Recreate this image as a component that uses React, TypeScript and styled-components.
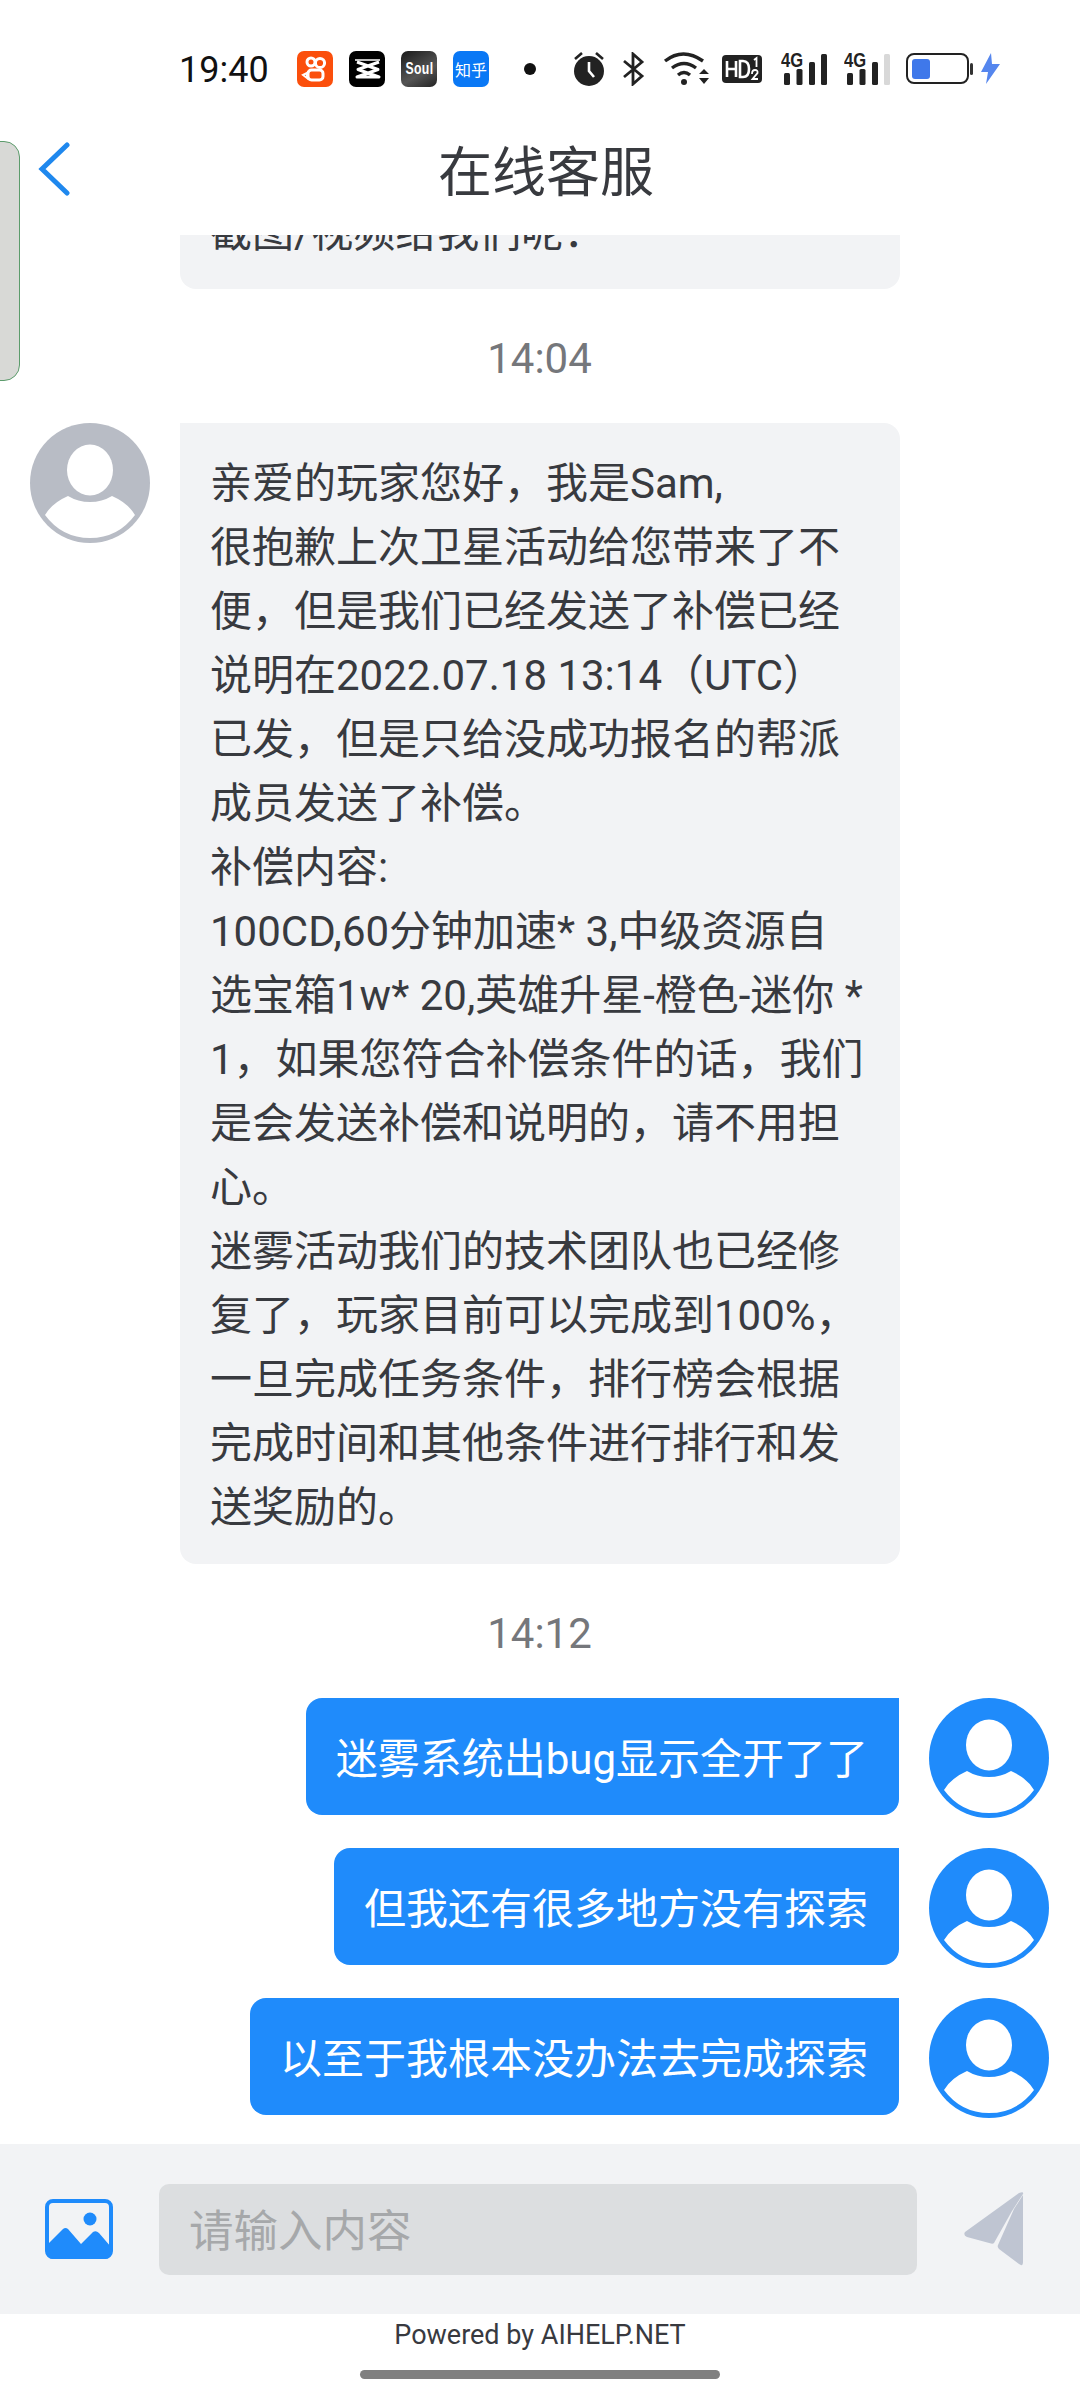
import React from "react";
import styled, { createGlobalStyle } from "styled-components";

const Global = createGlobalStyle`
  html, body { margin: 0; padding: 0; background: #fff; }
  body { font-family: Roboto, "Noto Sans CJK SC", sans-serif; }
  * { box-sizing: border-box; }
`;

const Page = styled.div`
  position: relative;
  width: 1080px;
  height: 2400px;
  display: flex;
  flex-direction: column;
  overflow: hidden;
  background: #fff;
  color: #383a3f;
`;

const StatusBar = styled.div`
  height: 130px;
  flex: none;
  display: flex;
  align-items: center;
  padding: 8px 0 0 179px;
`;
const Clock = styled.div`
  width: 118px;
  padding-top: 2px;
  font-size: 36px;
  line-height: 40px;
  color: #111;
`;
const AppIcons = styled.div`
  display: flex;
  gap: 16px;
`;
const AppIcon = styled.div<{ $bg: string }>`
  width: 36px;
  height: 36px;
  border-radius: 7px;
  background: ${(p) => p.$bg};
  color: #fff;
  display: flex;
  align-items: center;
  justify-content: center;
  overflow: hidden;
`;
const SoulText = styled.span`
  font-family: "Liberation Sans", sans-serif;
  font-size: 17px;
  font-weight: 700;
  transform: scaleX(0.72);
  letter-spacing: 0.5px;
`;
const ZhihuText = styled.span`
  font-family: "Noto Sans CJK SC", sans-serif;
  font-size: 16px;
  white-space: nowrap;
`;
const Dot = styled.div`
  width: 12px;
  height: 12px;
  border-radius: 50%;
  background: #111;
  margin: 0 37px 0 35px;
`;
const StatusIcons = styled.div`
  display: flex;
  align-items: center;
`;
const Glyph = styled.svg<{ $after: number }>`
  flex: none;
  margin-right: ${(p) => p.$after}px;
`;
const FourG = styled.div<{ $after: number }>`
  position: relative;
  flex: none;
  width: 46px;
  height: 32px;
  margin-right: ${(p) => p.$after}px;
  font-family: "Liberation Sans", sans-serif;
`;
const FourGLabel = styled.span`
  position: absolute;
  left: 0;
  top: -3px;
  font-size: 19.5px;
  line-height: 20px;
  font-weight: 700;
  color: #222;
  transform-origin: left top;
  transform: scaleX(0.85);
`;
const Bars = styled.svg`
  position: absolute;
  left: 0;
  top: 0;
`;

const Header = styled.header`
  position: relative;
  flex: none;
  height: 105px;
  display: flex;
  align-items: center;
  justify-content: center;
  padding: 0 0 18px 12px;
`;
const Title = styled.h1`
  margin: 0;
  font-size: 54px;
  line-height: 84px;
  font-weight: 400;
  color: #383a3f;
`;
const Back = styled.svg`
  position: absolute;
  left: 38px;
  top: 12px;
`;
const SidePill = styled.div`
  position: absolute;
  left: -20px;
  top: 141px;
  width: 40px;
  height: 240px;
  border-radius: 16px;
  background: #d8d9d6;
  border: 1px solid #5c9c6c;
`;

const Messages = styled.main`
  flex: 1;
  min-height: 0;
  overflow: hidden;
  display: flex;
  flex-direction: column;
  justify-content: flex-end;
  padding: 0 31px 26px 30px;
`;
const Stamp = styled.div`
  flex: none;
  text-align: center;
  font-size: 42px;
  padding-top: 5px;
  line-height: 129px;
  height: 134px;
  color: #75777b;
`;
const Row = styled.div<{ $mine?: boolean }>`
  flex: none;
  display: flex;
  gap: 30px;
  align-items: flex-start;
  justify-content: ${(p) => (p.$mine ? "flex-end" : "flex-start")};
  & + & {
    margin-top: 30px;
  }
`;
const Spacer = styled.div`
  flex: none;
  width: 120px;
`;
const Bubble = styled.div<{ $mine?: boolean }>`
  width: ${(p) => (p.$mine ? "auto" : "720px")};
  padding: ${(p) => (p.$mine ? "30px 31px 23px 30px" : "29px 31px 24px 30px")};
  border-radius: ${(p) => (p.$mine ? "16px 0 16px 16px" : "0 16px 16px 16px")};
  background: ${(p) => (p.$mine ? "#1f8bfb" : "#f2f3f5")};
  color: ${(p) => (p.$mine ? "#fff" : "#383a3f")};
  font-size: 42px;
  line-height: 64px;
`;
const Line = styled.div`
  white-space: nowrap;
`;
const AvatarIcon = styled.svg`
  flex: none;
`;

const InputBar = styled.div`
  flex: none;
  height: 170px;
  background: #f2f3f5;
  display: flex;
  align-items: center;
  padding: 0 57px 0 45px;
`;
const Field = styled.div`
  flex: none;
  width: 758px;
  height: 91px;
  margin: 0 47px 0 46px;
  border-radius: 10px;
  background: #dcdee0;
  color: #a6a8aa;
  font-size: 44.5px;
  line-height: 85px;
  padding: 6px 0 0 30px;
`;
const Powered = styled.footer`
  flex: none;
  height: 86px;
  display: flex;
  flex-direction: column;
  align-items: center;
`;
const PoweredText = styled.div`
  margin-top: 3px;
  font-size: 27px;
  line-height: 36px;
  color: #383a3f;
`;
const HomeBar = styled.div`
  width: 360px;
  height: 9px;
  margin-top: 17px;
  border-radius: 5px;
  background: #808080;
`;

const Avatar = ({ mine }: { mine?: boolean }) => (
  <AvatarIcon width="120" height="120" viewBox="0 0 120 120">
    <circle cx="60" cy="60" r="60" fill={mine ? "#1f8bfb" : "#b8bcc5"} />
    <ellipse cx="60" cy="47" rx="23" ry="25.5" fill="#fff" />
    <path d="M15 92Q22 80 38 73Q48 79 60 79Q72 79 82 73Q98 80 105 92Q88 115 60 115Q32 115 15 92Z" fill="#fff" />
  </AvatarIcon>
);

const Signal = ({ last, after }: { last: string; after: number }) => (
  <FourG $after={after}>
    <FourGLabel>4G</FourGLabel>
    <Bars width="46" height="32" viewBox="0 0 46 32">
      <rect x="3" y="20" width="6" height="12" rx="1.5" fill="#222" />
      <rect x="15.500" y="16" width="6" height="16" rx="1.5" fill="#222" />
      <rect x="28" y="9" width="6" height="23" rx="1.5" fill="#222" />
      <rect x="40" y="1" width="6" height="31" rx="1.5" fill={last} />
    </Bars>
  </FourG>
);

const firstLines = ["截图/视频给我们呢："];
const longLines = [
  "亲爱的玩家您好，我是Sam,",
  "很抱歉上次卫星活动给您带来了不",
  "便，但是我们已经发送了补偿已经",
  "说明在2022.07.18 13:14（UTC）",
  "已发，但是只给没成功报名的帮派",
  "成员发送了补偿。",
  "补偿内容:",
  "100CD,60分钟加速* 3,中级资源自",
  "选宝箱1w* 20,英雄升星-橙色-迷你 *",
  "1，如果您符合补偿条件的话，我们",
  "是会发送补偿和说明的，请不用担",
  "心。",
  "迷雾活动我们的技术团队也已经修",
  "复了，玩家目前可以完成到100%，",
  "一旦完成任务条件，排行榜会根据",
  "完成时间和其他条件进行排行和发",
  "送奖励的。",
];
const mine = ["迷雾系统出bug显示全开了了", "但我还有很多地方没有探索", "以至于我根本没办法去完成探索"];

export default function App() {
  return (
    <Page>
      <Global />
      <StatusBar>
        <Clock>19:40</Clock>
        <AppIcons>
          <AppIcon $bg="#fb4f0c">
            <svg width="30" height="30" viewBox="0 0 30 30" fill="none" stroke="#fff" strokeWidth="3">
              <circle cx="11" cy="8" r="4" />
              <circle cx="20" cy="9" r="4.6" />
              <rect x="8" y="16" width="15" height="10" rx="3.5" />
              <path d="M7 19L3 21L7 24Z" strokeWidth="2" />
            </svg>
          </AppIcon>
          <AppIcon $bg="#000">
            <svg width="30" height="30" viewBox="0 0 30 30" fill="none" stroke="#fff" strokeWidth="3">
              <path d="M3 6H28" strokeWidth="1.600" />
              <path d="M27 8L6 15.500L27 23H5L26 15.500L5 8" strokeLinejoin="round" />
            </svg>
          </AppIcon>
          <AppIcon $bg="linear-gradient(150deg,#1a1a1a,#555 60%,#222)">
            <SoulText>Soul</SoulText>
          </AppIcon>
          <AppIcon $bg="#0a78f5">
            <ZhihuText>知乎</ZhihuText>
          </AppIcon>
        </AppIcons>
        <Dot />
        <StatusIcons>
          <Glyph $after={18} width="32" height="34" viewBox="0 0 32 34">
            <circle cx="16" cy="19" r="15" fill="#222" />
            <path d="M16 10V19L21 25" fill="none" stroke="#fff" strokeWidth="2.6" />
            <path d="M2 7L9 1M30 7L23 1" stroke="#222" strokeWidth="2.6" />
          </Glyph>
          <Glyph $after={18} width="22" height="34" viewBox="0 0 22 34" fill="none" stroke="#222" strokeWidth="2.8">
            <path d="M1 9L19 24L10 32V2L19 10L1 25" />
          </Glyph>
          <Glyph $after={13} width="46" height="34" viewBox="0 0 46 34" fill="none" stroke="#222" strokeWidth="3.4">
            <path d="M2 9Q20 -5 40 9" />
            <path d="M9 16Q21 7 33 16" />
            <path d="M15 23Q21 18 27 23" />
            <circle cx="21" cy="30" r="3" fill="#222" stroke="none" />
            <path d="M36 22H46L41 17ZM36 26H46L41 32Z" fill="#222" stroke="none" />
          </Glyph>
          <Glyph $after={19} width="40" height="28" viewBox="0 0 40 28">
            <rect width="40" height="28" rx="4" fill="#222" />
            <path d="M5 6V22M14 6V22M5 14H14M18 6V22H21Q27 22 27 14Q27 6 21 6Z" fill="none" stroke="#fff" strokeWidth="2.6" />
            <path d="M32 5L34.500 3V12M30 19Q30 15 33 15Q36 15 35.500 18L30.500 24H36" fill="none" stroke="#fff" strokeWidth="1.800" />
          </Glyph>
          <Signal last="#222" after={17} />
          <Signal last="#d8d8d8" after={16} />
          <Glyph $after={0} width="94" height="32" viewBox="0 0 94 32">
            <rect x="1" y="1" width="61" height="29" rx="7" fill="none" stroke="#222" strokeWidth="2" />
            <rect x="6" y="6" width="18" height="20" rx="3" fill="#3f78ea" />
            <rect x="64" y="10" width="3" height="12" rx="1.500" fill="#333" />
            <path d="M85 0L75 19H82L80 31L94 11H86Z" fill="#5586ee" />
          </Glyph>
        </StatusIcons>
      </StatusBar>
      <SidePill />
      <Header>
        <Back width="34" height="54" viewBox="0 0 34 54" fill="none" stroke="#1f88ee" strokeWidth="5" strokeLinecap="round">
          <path d="M29 3L4 27L29 51" />
        </Back>
        <Title>在线客服</Title>
      </Header>
      <Messages>
        <Row>
          <Spacer />
          <Bubble>
            {firstLines.map((l) => (
              <Line key={l}>{l}</Line>
            ))}
          </Bubble>
        </Row>
        <Stamp>14:04</Stamp>
        <Row>
          <Avatar />
          <Bubble>
            {longLines.map((l) => (
              <Line key={l}>{l}</Line>
            ))}
          </Bubble>
        </Row>
        <Stamp>14:12</Stamp>
        {mine.map((m) => (
          <Row $mine key={m}>
            <Bubble $mine>
              <Line>{m}</Line>
            </Bubble>
            <Avatar mine />
          </Row>
        ))}
      </Messages>
      <InputBar>
        <Glyph $after={0} width="68" height="60" viewBox="0 0 68 60">
          <rect x="2" y="2" width="64" height="56" rx="6" fill="none" stroke="#1f8bfb" strokeWidth="4" />
          <circle cx="45" cy="20" r="6.500" fill="#1f8bfb" />
          <path d="M2 46L18 30Q20.500 28 23 30L36 45L48 33Q51 31 54 34L66 48V52Q66 60 60 60H8Q2 60 2 52Z" fill="#1f8bfb" />
        </Glyph>
        <Field>请输入内容</Field>
        <Glyph $after={0} width="60" height="74" viewBox="0 0 60 74">
          <path d="M55 1Q60 -1 59 2L48 19L30 51Q29 52 27 51.500L3 45Q-1 43 1 40Z" fill="#bfc5d2" />
          <path d="M59 3V70Q59 75 55 72L35 57Q33 55 34 53L50 17Z" fill="#bfc5d2" />
        </Glyph>
      </InputBar>
      <Powered>
        <PoweredText>Powered by AIHELP.NET</PoweredText>
        <HomeBar />
      </Powered>
    </Page>
  );
}
